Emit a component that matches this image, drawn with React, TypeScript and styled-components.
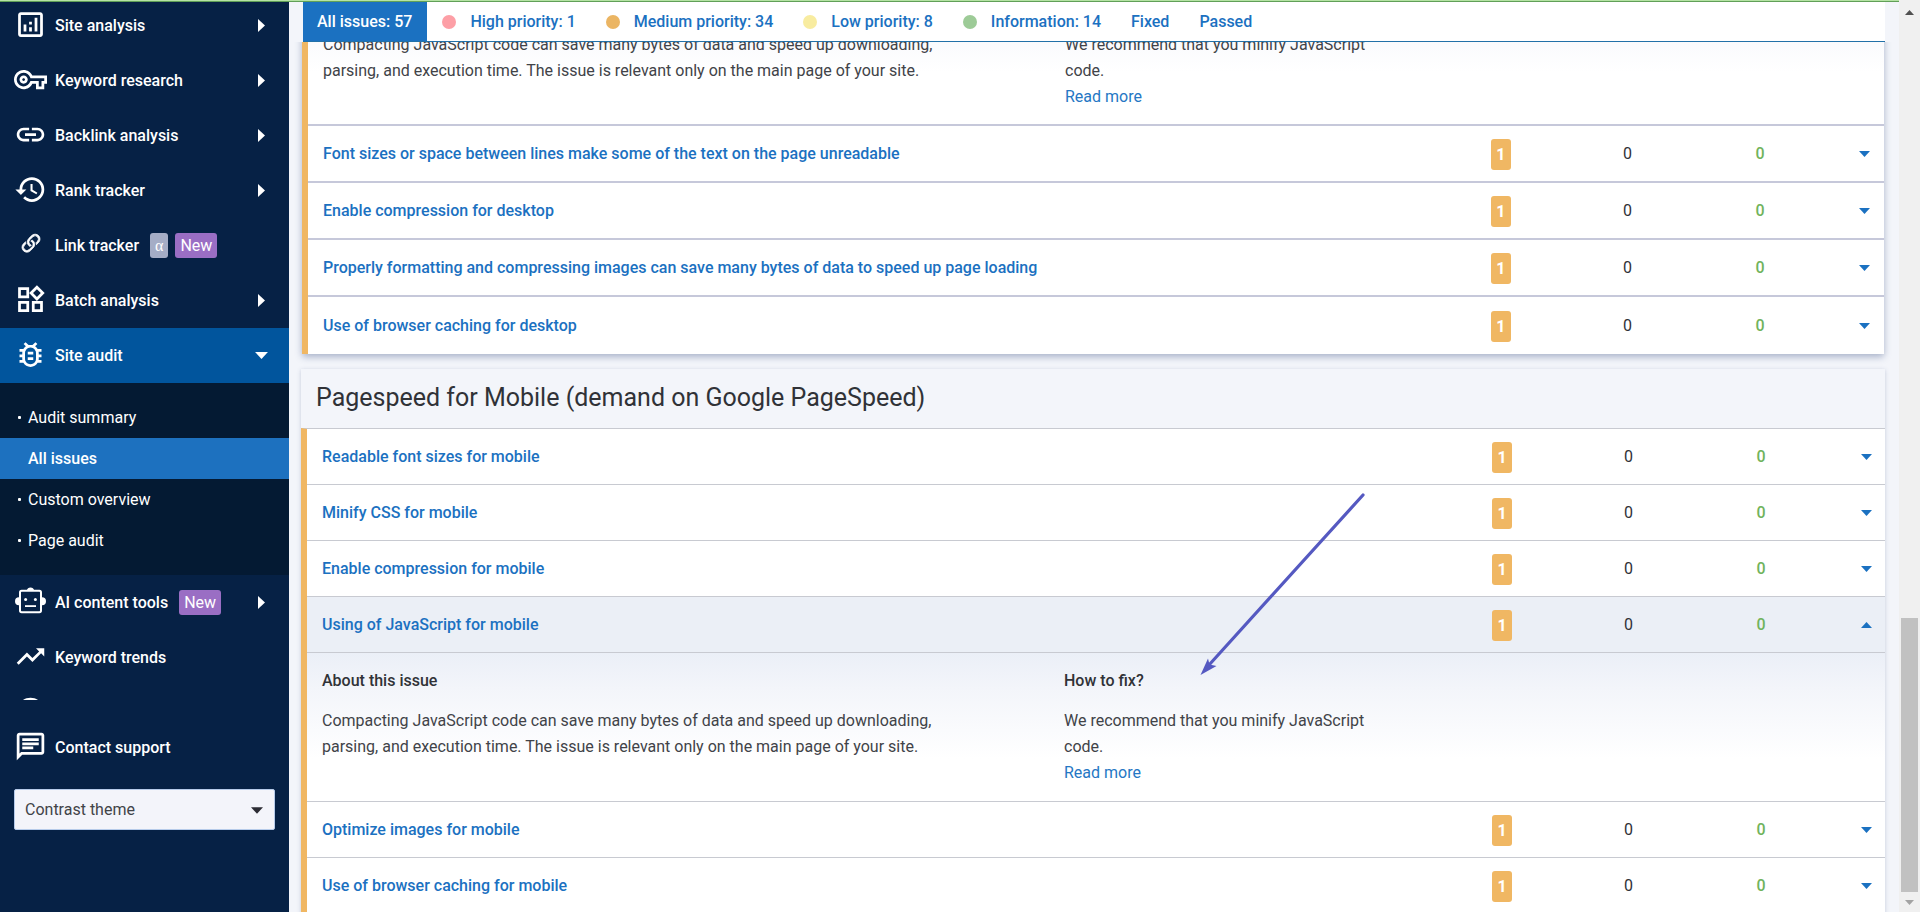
import React from "react";
import styled, { createGlobalStyle, css } from "styled-components";
import {
  MdHistory,
  MdLink,
  MdHelpOutline,
  MdOutlineAnalytics,
  MdOutlineBugReport,
  MdOutlineChat,
  MdOutlineVpnKey,
  MdOutlineWidgets,
  MdTrendingUp,
} from "react-icons/md";
import { BsLink45Deg } from "react-icons/bs";

const color = {
  navy: "#062145",
  navyDark: "#041a33",
  section: "#01559d",
  blue: "#1b71c1",
  page: "#f3f5fa",
  text: "#303237",
  softText: "#414348",
  orange: "#f0b763",
  green: "#71b35c",
  line: "#c8cad1",
};

const GlobalStyle = createGlobalStyle`
  *, *::before, *::after { box-sizing: border-box; }
  body { margin: 0; overflow: hidden; font: 16px/26px Roboto, "Liberation Sans", sans-serif; color: ${color.text}; background: ${color.page}; }
  button, select { font: inherit; color: inherit; }
  button { padding: 0; border: 0; background: none; cursor: pointer; }
  a { text-decoration: none; color: inherit; }
  h2, h3, p, ul { margin: 0; padding: 0; font: inherit; }
  ul { list-style: none; }
`;

const Page = styled.div`
  display: grid;
  grid-template-columns: 289px minmax(0, 1fr) 21px;
  height: 100vh;
`;

const Loading = styled.div`
  flex: none;
  height: 2px;
  background: #b5e3a4;
  border-bottom: 1px solid #61a058;
`;

const Sidebar = styled.aside`
  display: flex;
  flex-direction: column;
  min-height: 0;
  background: ${color.navy};
  color: #fff;
`;

const Nav = styled.nav`
  flex: 1;
  min-height: 0;
  overflow: hidden;
`;

const NavList = styled.ul`
  margin-top: -4px;
`;

const NavLink = styled.a<{ $active?: boolean }>`
  display: flex;
  align-items: center;
  height: 55px;
  padding: 0 21px 0 14px;
  font-weight: 500;
  background: ${(p) => (p.$active ? color.section : "transparent")};
`;

const NavIcon = styled.span`
  display: flex;
  justify-content: center;
  width: 33px;
  margin-right: 8px;
  padding-bottom: 3px;
`;

const CaretSlot = styled.span`
  display: flex;
  justify-content: center;
  width: 13px;
  margin-left: auto;
`;

const Tag = styled.span<{ $kind: "alpha" | "new" }>`
  margin-left: 11px;
  padding: 0 5px;
  border-radius: 3px;
  line-height: 25px;
  font-weight: 400;
  font-family: ${(p) => (p.$kind === "alpha" ? '"Liberation Serif", serif' : "inherit")};
  background: ${(p) => (p.$kind === "alpha" ? "#a5adc6" : "#9a6ec4")};

  & + & {
    margin-left: 7px;
  }
`;

const SubList = styled.ul`
  padding: 14px 0;
  background: ${color.navyDark};
`;

const SubLink = styled.a<{ $active?: boolean }>`
  display: flex;
  align-items: center;
  gap: 7px;
  height: 41px;
  padding-left: 18px;
  font-weight: ${(p) => (p.$active ? 500 : 400)};
  background: ${(p) => (p.$active ? "#1d71bf" : "transparent")};

  &::before {
    content: "";
    width: 3px;
    height: 3px;
    border-radius: 1px;
    background: ${(p) => (p.$active ? "transparent" : "#fff")};
  }
`;

const SideFooter = styled.div`
  padding: 20px 0 82px;
`;

const ThemePicker = styled.label`
  position: relative;
  display: block;
  margin: 14px 14px 0;
  color: ${color.text};

  svg {
    position: absolute;
    right: 12px;
    top: 18px;
    pointer-events: none;
  }
`;

const ThemeSelect = styled.select`
  display: block;
  width: 100%;
  height: 41px;
  padding: 0 10px;
  appearance: none;
  border: 1px solid #b6cbea;
  border-radius: 2px;
  color: ${color.softText};
  background: #f3f4fa;
`;

const Main = styled.main`
  position: relative;
  display: flex;
  flex-direction: column;
  min-height: 0;
  min-width: 0;
`;

const TabBar = styled.div`
  position: relative;
  z-index: 1;
  display: flex;
  flex: none;
  height: 40px;
  margin: 0 14px;
  background: #fff;
  border-bottom: 1px solid #2271a8;
`;

const Tab = styled.button<{ $active?: boolean }>`
  display: flex;
  align-items: center;
  gap: 14px;
  padding: 0 15px 0 14px;
  font-weight: 500;
  color: ${(p) => (p.$active ? "#fff" : color.blue)};
  background: ${(p) => (p.$active ? color.blue : "transparent")};

  & + & {
    padding-left: 15px;
  }
`;

const Dot = styled.span<{ $color: string }>`
  width: 14px;
  height: 14px;
  border-radius: 50%;
  background: ${(p) => p.$color};
`;

const Scroller = styled.div`
  flex: 1;
  min-height: 0;
  overflow: hidden;
  padding: 0 15px 0 13px;
`;

const Card = styled.section<{ $wide?: boolean }>`
  ${(p) =>
    p.$wide
      ? css`
          margin: 15px -1px 0;
          box-shadow: 0 1px 4px rgba(60, 80, 130, 0.25);
        `
      : css`
          margin-top: -10px;
          background: #fff;
          border-radius: 0 0 3px 3px;
          box-shadow: 0 3px 7px rgba(60, 80, 130, 0.4);
        `}
`;

const CardTitle = styled.h2`
  height: 59px;
  padding: 16px 15px 0;
  font-size: 25px;
  line-height: 26px;
`;

const Table = styled.table<{ $thick?: boolean }>`
  width: 100%;
  table-layout: fixed;
  border-collapse: separate;
  border-spacing: 0;
  background: #fff;
  border-left: 6px solid ${color.orange};
  border-top: ${(p) => (p.$thick ? "0" : `1px solid ${color.line}`)};

  td {
    padding: 0;
    text-align: center;
    border-bottom: ${(p) => (p.$thick ? "2px solid #c6c8da" : `1px solid ${color.line}`)};
  }
  tr:last-child td {
    border-bottom-width: ${(p) => (p.$thick ? 0 : 1)}px;
  }
`;

const Row = styled.tr<{ $open?: boolean; $tall?: boolean }>`
  height: ${(p) => (p.$tall ? 57 : 56)}px;
  background: ${(p) => (p.$open ? "#ebeff6" : "transparent")};
`;

const TitleCell = styled.td`
  && {
    padding-left: 15px;
    text-align: left;
  }
`;

const IssueButton = styled.button`
  color: ${color.blue};
  font-weight: 500;
  text-align: left;
`;

const Count = styled.span`
  display: inline-block;
  width: 20px;
  margin-top: 1px;
  border-radius: 3px;
  line-height: 31px;
  font-weight: 700;
  color: #fff;
  background: ${color.orange};
  vertical-align: middle;
`;

const NumberCell = styled.td<{ $green?: boolean }>`
  font-weight: ${(p) => (p.$green ? 500 : 400)};
  color: ${(p) => (p.$green ? color.green : color.text)};
`;

const Toggle = styled.button`
  display: flex;
  align-items: center;
  justify-content: center;
  width: 100%;
  height: 26px;
`;

const Details = styled.div<{ $partial?: boolean }>`
  display: grid;
  grid-template-columns: 742px 340px;
  padding: ${(p) => (p.$partial ? "0 15px 14px" : "15px")};
  text-align: left;
  background: linear-gradient(
    ${(p) => (p.$partial ? "#f8f9fc, #fff 40px" : "#ebeff7, #f3f5fa 36px, #fff 106px")}
  );
`;

const DetailHeading = styled.h3`
  margin-bottom: 14px;
  font-weight: 500;
`;

const DetailText = styled.p`
  max-width: 650px;
  color: ${color.softText};
`;

const ReadMore = styled.a`
  color: #2577c4;
`;

const Pointer = styled.svg`
  position: absolute;
  left: 908px;
  top: 490px;
  pointer-events: none;
`;

const Scrollbar = styled.div`
  display: flex;
  flex-direction: column;
  align-items: center;
  justify-content: space-between;
  padding: 10px 1px 7px 0;
  background: #f0f0f0;
`;

const Thumb = styled.div`
  width: 17px;
  height: 30vh;
  margin: auto 0 8px;
  background: #c1c1c1;
`;

type Direction = "up" | "down" | "right";

const shapes: Record<Direction, string> = {
  up: "M0 6L5.5 0L11 6Z",
  down: "M0 0H11L5.5 6Z",
  right: "M0 0L7 6.5L0 13Z",
};

function Caret({ dir, fill, width }: { dir: Direction; fill: string; width?: number }) {
  const right = dir === "right";
  const w = width ?? (right ? 7 : 11);
  return (
    <svg
      width={w}
      height={right ? 13 : Math.round(w * 0.56)}
      viewBox={right ? "0 0 7 13" : "0 0 11 6"}
      fill={fill}
      aria-hidden="true"
    >
      <path d={shapes[dir]} />
    </svg>
  );
}

function RobotIcon() {
  return (
    <svg width="33" height="33" viewBox="0 0 33 33" fill="currentColor" aria-hidden="true">
      <path d="M5 12.2A4 4 0 0 0 5 20.2ZM28 12.2A4 4 0 0 1 28 20.2ZM12.8 5.5A3.8 3.8 0 0 1 20.2 5.5Z" />
      <rect x="6" y="5.8" width="21" height="21.4" rx="1.6" fill="none" stroke="currentColor" strokeWidth="2" />
      <circle cx="11.6" cy="14.5" r="1.5" />
      <circle cx="21.4" cy="14.5" r="1.5" />
      <rect x="11" y="20.2" width="11" height="1.8" />
    </svg>
  );
}

interface NavEntry {
  label: string;
  icon: React.ReactNode;
  caret?: Direction;
  active?: boolean;
  tags?: ("alpha" | "new")[];
}

function NavRow({ label, icon, caret, active, tags = [] }: NavEntry) {
  return (
    <NavLink href="#" $active={active}>
      <NavIcon>{icon}</NavIcon>
      {label}
      {tags.map((t) => (
        <Tag key={t} $kind={t}>
          {t === "alpha" ? "α" : "New"}
        </Tag>
      ))}
      {caret && (
        <CaretSlot>
          <Caret dir={caret} fill="#fff" width={caret === "down" ? 13 : undefined} />
        </CaretSlot>
      )}
    </NavLink>
  );
}

const topNav: NavEntry[] = [
  { label: "Site analysis", icon: <MdOutlineAnalytics size={33} />, caret: "right" },
  { label: "Keyword research", icon: <MdOutlineVpnKey size={33} />, caret: "right" },
  { label: "Backlink analysis", icon: <MdLink size={33} />, caret: "right" },
  { label: "Rank tracker", icon: <MdHistory size={33} />, caret: "right" },
  {
    label: "Link tracker",
    icon: <BsLink45Deg size={26} stroke="currentColor" strokeWidth={0.5} />,
    tags: ["alpha", "new"],
  },
  { label: "Batch analysis", icon: <MdOutlineWidgets size={33} />, caret: "right" },
  { label: "Site audit", icon: <MdOutlineBugReport size={33} />, caret: "down", active: true },
];

const bottomNav: NavEntry[] = [
  { label: "AI content tools", icon: <RobotIcon />, caret: "right", tags: ["new"] },
  { label: "Keyword trends", icon: <MdTrendingUp size={33} /> },
  { label: "", icon: <MdHelpOutline size={33} /> },
];

const auditPages = ["Audit summary", "All issues", "Custom overview", "Page audit"];

const tabs = [
  { label: "All issues: 57", active: true },
  { label: "High priority: 1", dot: "#fd9fa6" },
  { label: "Medium priority: 34", dot: "#ebb563" },
  { label: "Low priority: 8", dot: "#f8eca0" },
  { label: "Information: 14", dot: "#9dcb97" },
  { label: "Fixed" },
  { label: "Passed" },
];

const desktopIssues = [
  "Font sizes or space between lines make some of the text on the page unreadable",
  "Enable compression for desktop",
  "Properly formatting and compressing images can save many bytes of data to speed up page loading",
  "Use of browser caching for desktop",
];

const OPEN_ISSUE = "Using of JavaScript for mobile";

const mobileIssues = [
  "Readable font sizes for mobile",
  "Minify CSS for mobile",
  "Enable compression for mobile",
  OPEN_ISSUE,
  "Optimize images for mobile",
  "Use of browser caching for mobile",
];

const Col = styled.col<{ $width?: number }>`
  width: ${(p) => (p.$width ? `${p.$width}px` : "auto")};
`;

function Columns() {
  return (
    <colgroup>
      <Col />
      <Col $width={160} />
      <Col $width={93} />
      <Col $width={172} />
      <Col $width={38} />
    </colgroup>
  );
}

function IssueRow({ title, open, tall }: { title: string; open?: boolean; tall?: boolean }) {
  return (
    <Row $open={open} $tall={tall}>
      <TitleCell>
        <IssueButton aria-expanded={!!open}>{title}</IssueButton>
      </TitleCell>
      <td>
        <Count>1</Count>
      </td>
      <NumberCell>0</NumberCell>
      <NumberCell $green>0</NumberCell>
      <td>
        <Toggle aria-label={open ? "Collapse" : "Expand"}>
          <Caret dir={open ? "up" : "down"} fill={color.blue} />
        </Toggle>
      </td>
    </Row>
  );
}

function DetailsRow({ partial }: { partial?: boolean }) {
  return (
    <tr>
      <td colSpan={5}>
        <Details $partial={partial}>
          <div>
            {!partial && <DetailHeading>About this issue</DetailHeading>}
            <DetailText>
              Compacting JavaScript code can save many bytes of data and speed up downloading, parsing, and
              execution time. The issue is relevant only on the main page of your site.
            </DetailText>
          </div>
          <div>
            {!partial && <DetailHeading>How to fix?</DetailHeading>}
            <DetailText>We recommend that you minify JavaScript code.</DetailText>
            <ReadMore href="#">Read more</ReadMore>
          </div>
        </Details>
      </td>
    </tr>
  );
}

export default function App() {
  return (
    <>
      <GlobalStyle />
      <Page>
        <Sidebar>
          <Loading />
          <Nav>
            <NavList>
              {topNav.map((n) => (
                <li key={n.label}>
                  <NavRow {...n} />
                </li>
              ))}
              <li>
                <SubList>
                  {auditPages.map((label) => (
                    <li key={label}>
                      <SubLink href="#" $active={label === "All issues"}>
                        {label}
                      </SubLink>
                    </li>
                  ))}
                </SubList>
              </li>
              {bottomNav.map((n) => (
                <li key={n.label}>
                  <NavRow {...n} />
                </li>
              ))}
            </NavList>
          </Nav>
          <SideFooter>
            <NavRow label="Contact support" icon={<MdOutlineChat size={33} />} />
            <ThemePicker>
              <ThemeSelect aria-label="Theme">
                <option>Contrast theme</option>
              </ThemeSelect>
              <Caret dir="down" fill="#2b2b33" width={12} />
            </ThemePicker>
          </SideFooter>
        </Sidebar>

        <Main>
          <Loading />
          <TabBar>
            {tabs.map((t) => (
              <Tab key={t.label} $active={t.active}>
                {t.dot && <Dot $color={t.dot} />}
                {t.label}
              </Tab>
            ))}
          </TabBar>
          <Scroller>
            <Card>
              <Table $thick>
                <Columns />
                <tbody>
                  <DetailsRow partial />
                  {desktopIssues.map((title) => (
                    <IssueRow key={title} title={title} tall />
                  ))}
                </tbody>
              </Table>
            </Card>
            <Card $wide>
              <CardTitle>Pagespeed for Mobile (demand on Google PageSpeed)</CardTitle>
              <Table>
                <Columns />
                <tbody>
                  {mobileIssues.map((title) => (
                    <React.Fragment key={title}>
                      <IssueRow title={title} open={title === OPEN_ISSUE} />
                      {title === OPEN_ISSUE && <DetailsRow />}
                    </React.Fragment>
                  ))}
                </tbody>
              </Table>
            </Card>
          </Scroller>
          <Pointer width="172" height="190" viewBox="1197 490 172 190" fill="#5559c1" aria-hidden="true">
            <path d="M1363 495L1209 665" stroke="#5559c1" strokeWidth="3.2" strokeLinecap="round" />
            <path d="M1200.5 675L1208 658.5L1209.5 664.5L1216.5 666Z" />
          </Pointer>
        </Main>

        <Scrollbar aria-hidden="true">
          <Caret dir="up" fill="#505050" width={9} />
          <Thumb />
          <Caret dir="down" fill="#a3a3a3" width={9} />
        </Scrollbar>
      </Page>
    </>
  );
}
